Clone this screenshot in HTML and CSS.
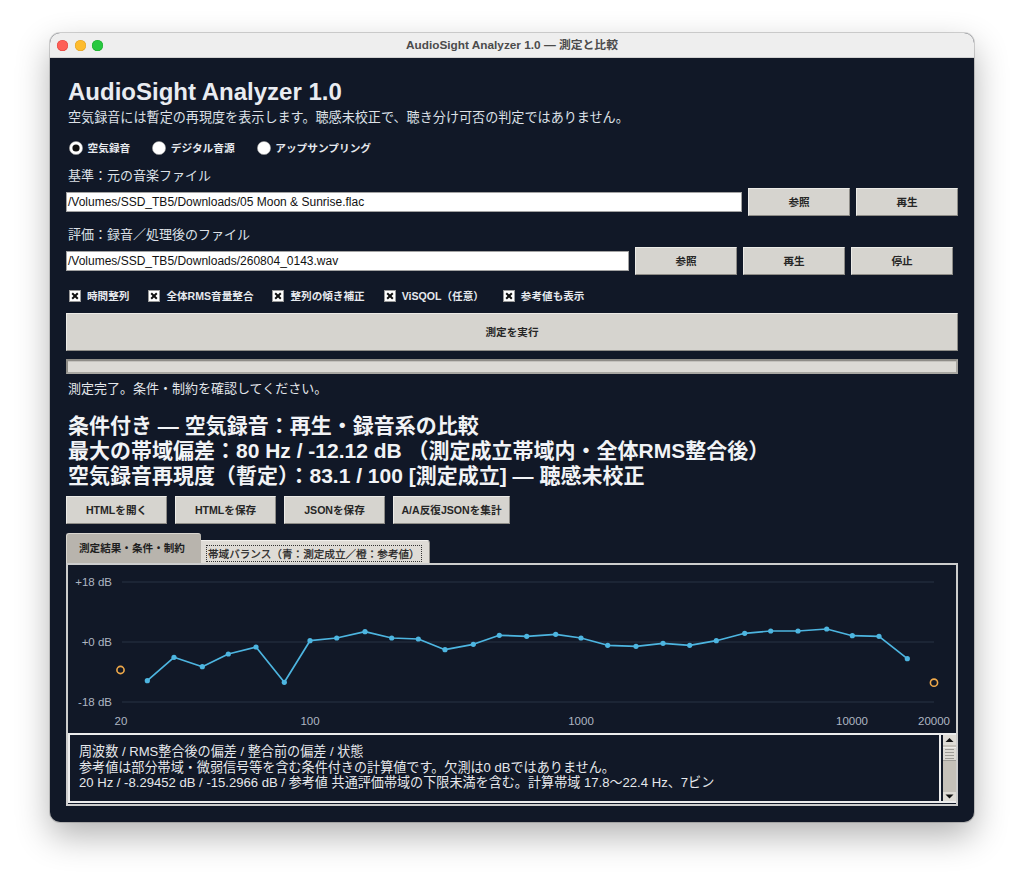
FILE: index.html
```html
<!DOCTYPE html>
<html lang="ja">
<head>
<meta charset="utf-8">
<title>AudioSight Analyzer 1.0 — 測定と比較</title>
<link rel="stylesheet" href="styles.css">
</head>
<body>
<div class="window">
  <div class="titlebar">
    <div class="lights"><span class="light red"></span><span class="light yellow"></span><span class="light green"></span></div>
    <div class="wintitle">AudioSight Analyzer 1.0 — 測定と比較</div>
    <div></div>
  </div>
  <div class="content">
    <h1 class="app-title">AudioSight Analyzer 1.0</h1>
    <p class="subtitle">空気録音には暫定の再現度を表示します。聴感未校正で、聴き分け可否の判定ではありません。</p>

    <div class="radios">
      <label class="radio"><svg class="radio-icon" viewBox="0 0 14 14"><circle cx="7" cy="7" r="6.6" fill="#ffffff" stroke="#9a9a9a" stroke-width="0.6"/><circle cx="7" cy="7" r="3.6" fill="#111111"/></svg><span>空気録音</span></label>
      <label class="radio"><svg class="radio-icon" viewBox="0 0 14 14"><circle cx="7" cy="7" r="6.6" fill="#ffffff" stroke="#9a9a9a" stroke-width="0.6"/></svg><span>デジタル音源</span></label>
      <label class="radio"><svg class="radio-icon" viewBox="0 0 14 14"><circle cx="7" cy="7" r="6.6" fill="#ffffff" stroke="#9a9a9a" stroke-width="0.6"/></svg><span>アップサンプリング</span></label>
    </div>

    <div class="field-label first">基準：元の音楽ファイル</div>
    <div class="file-row">
      <div class="entry">/Volumes/SSD_TB5/Downloads/05 Moon &amp; Sunrise.flac</div>
      <button class="btn">参照</button>
      <button class="btn">再生</button>
    </div>

    <div class="field-label">評価：録音／処理後のファイル</div>
    <div class="file-row second">
      <div class="entry">/Volumes/SSD_TB5/Downloads/260804_0143.wav</div>
      <button class="btn">参照</button>
      <button class="btn">再生</button>
      <button class="btn">停止</button>
    </div>

    <div class="checks">
      <label class="check"><svg class="check-icon" viewBox="0 0 12 12"><rect x="0.5" y="0.5" width="11" height="11" fill="#ffffff" stroke="#9a9a9a"/><path d="M3.2 3.2 L8.8 8.8 M8.8 3.2 L3.2 8.8" stroke="#111" stroke-width="2"/></svg><span>時間整列</span></label>
      <label class="check"><svg class="check-icon" viewBox="0 0 12 12"><rect x="0.5" y="0.5" width="11" height="11" fill="#ffffff" stroke="#9a9a9a"/><path d="M3.2 3.2 L8.8 8.8 M8.8 3.2 L3.2 8.8" stroke="#111" stroke-width="2"/></svg><span>全体RMS音量整合</span></label>
      <label class="check"><svg class="check-icon" viewBox="0 0 12 12"><rect x="0.5" y="0.5" width="11" height="11" fill="#ffffff" stroke="#9a9a9a"/><path d="M3.2 3.2 L8.8 8.8 M8.8 3.2 L3.2 8.8" stroke="#111" stroke-width="2"/></svg><span>整列の傾き補正</span></label>
      <label class="check"><svg class="check-icon" viewBox="0 0 12 12"><rect x="0.5" y="0.5" width="11" height="11" fill="#ffffff" stroke="#9a9a9a"/><path d="M3.2 3.2 L8.8 8.8 M8.8 3.2 L3.2 8.8" stroke="#111" stroke-width="2"/></svg><span>ViSQOL（任意）</span></label>
      <label class="check"><svg class="check-icon" viewBox="0 0 12 12"><rect x="0.5" y="0.5" width="11" height="11" fill="#ffffff" stroke="#9a9a9a"/><path d="M3.2 3.2 L8.8 8.8 M8.8 3.2 L3.2 8.8" stroke="#111" stroke-width="2"/></svg><span>参考値も表示</span></label>
    </div>

    <button class="btn big">測定を実行</button>
    <div class="progress"><div class="progress-inner"></div></div>

    <div class="status">測定完了。条件・制約を確認してください。</div>

    <div class="results">
      <div>条件付き — 空気録音：再生・録音系の比較</div>
      <div>最大の帯域偏差：80 Hz / -12.12 dB （測定成立帯域内・全体RMS整合後）</div>
      <div>空気録音再現度（暫定）：83.1 / 100 [測定成立] — 聴感未校正</div>
    </div>

    <div class="actions">
      <button class="btn act">HTMLを開く</button>
      <button class="btn act">HTMLを保存</button>
      <button class="btn act">JSONを保存</button>
      <button class="btn act wide">A/A反復JSONを集計</button>
    </div>

    <div class="tabs">
      <div class="tab tab-a">測定結果・条件・制約</div>
      <div class="tab tab-b"><span class="focus">帯域バランス（青：測定成立／橙：参考値）</span></div>
    </div>

    <div class="panel">
      <div class="chart">
        <svg class="chart-svg" viewBox="0 0 888 168" width="888" height="168">
          <g stroke="#283244" stroke-width="1">
            <line x1="54" y1="17" x2="866" y2="17"/>
            <line x1="54" y1="77" x2="866" y2="77"/>
            <line x1="54" y1="137" x2="866" y2="137"/>
          </g>
          <g class="axis" fill="#aeb6c2" font-size="11.5">
            <text x="44" y="21" text-anchor="end">+18 dB</text>
            <text x="44" y="81" text-anchor="end">+0 dB</text>
            <text x="44" y="141" text-anchor="end">-18 dB</text>
            <text x="53" y="160" text-anchor="middle">20</text>
            <text x="242" y="160" text-anchor="middle">100</text>
            <text x="513" y="160" text-anchor="middle">1000</text>
            <text x="784" y="160" text-anchor="middle">10000</text>
            <text x="866" y="160" text-anchor="middle">20000</text>
          </g>
          <polyline fill="none" stroke="#4db5e0" stroke-width="1.7" stroke-linejoin="round"
            points="79.3,115.7 106,92.3 134.3,101.7 160.3,89 188,82 216.3,117.3 242,75.7 268.7,73 297,66.7 323.7,73 350.3,74 377,84.7 405.3,79.3 431.3,70.3 458.7,71.3 487.7,69.3 513,73 539.7,80.3 568,81.3 595,78.3 621.7,80.3 648.3,75.7 676.7,68.3 702.7,66 730,66 758.7,64 784.3,70.7 811,71.3 839.3,93.7"/>
          <g fill="#4db5e0">
            <circle cx="79.3" cy="115.7" r="2.6"/><circle cx="106" cy="92.3" r="2.6"/><circle cx="134.3" cy="101.7" r="2.6"/>
            <circle cx="160.3" cy="89" r="2.6"/><circle cx="188" cy="82" r="2.6"/><circle cx="216.3" cy="117.3" r="2.6"/>
            <circle cx="242" cy="75.7" r="2.6"/><circle cx="268.7" cy="73" r="2.6"/><circle cx="297" cy="66.7" r="2.6"/>
            <circle cx="323.7" cy="73" r="2.6"/><circle cx="350.3" cy="74" r="2.6"/><circle cx="377" cy="84.7" r="2.6"/>
            <circle cx="405.3" cy="79.3" r="2.6"/><circle cx="431.3" cy="70.3" r="2.6"/><circle cx="458.7" cy="71.3" r="2.6"/>
            <circle cx="487.7" cy="69.3" r="2.6"/><circle cx="513" cy="73" r="2.6"/><circle cx="539.7" cy="80.3" r="2.6"/>
            <circle cx="568" cy="81.3" r="2.6"/><circle cx="595" cy="78.3" r="2.6"/><circle cx="621.7" cy="80.3" r="2.6"/>
            <circle cx="648.3" cy="75.7" r="2.6"/><circle cx="676.7" cy="68.3" r="2.6"/><circle cx="702.7" cy="66" r="2.6"/>
            <circle cx="730" cy="66" r="2.6"/><circle cx="758.7" cy="64" r="2.6"/><circle cx="784.3" cy="70.7" r="2.6"/>
            <circle cx="811" cy="71.3" r="2.6"/><circle cx="839.3" cy="93.7" r="2.6"/>
          </g>
          <g fill="none" stroke="#f0a94a" stroke-width="1.6">
            <circle cx="52.5" cy="105" r="3.6"/>
            <circle cx="866" cy="117.7" r="3.6"/>
          </g>
        </svg>
      </div>
      <div class="textframe">
        <div class="textarea">
          <div>周波数 / RMS整合後の偏差 / 整合前の偏差 / 状態</div>
          <div>参考値は部分帯域・微弱信号等を含む条件付きの計算値です。欠測は0 dBではありません。</div>
          <div>20 Hz / -8.29452 dB / -15.2966 dB / 参考値 共通評価帯域の下限未満を含む。計算帯域 17.8〜22.4 Hz、7ビン</div>
        </div>
        <div class="scrollbar">
          <div class="sb-arrow up"><svg viewBox="0 0 13 10" width="13" height="10"><path d="M2.5 7 L6.5 3 L10.5 7 Z" fill="#111"/></svg></div>
          <div class="sb-thumb"><span></span><span></span><span></span><span></span></div>
          <div class="sb-trough"></div>
          <div class="sb-arrow down"><svg viewBox="0 0 13 9" width="13" height="9"><path d="M2.5 2.5 L10.5 2.5 L6.5 6.5 Z" fill="#111"/></svg></div>
        </div>
      </div>
    </div>
  </div>
</div>
</body>
</html>
```

FILE: styles.css
```css
* { box-sizing: border-box; }
html, body { margin: 0; padding: 0; }
body {
  background: #ffffff;
  font-family: "Liberation Sans", "Noto Sans CJK JP", sans-serif;
  width: 1024px;
  height: 889px;
  overflow: hidden;
}

.window {
  width: 924px;
  height: 789px;
  margin: 33px 0 0 50px;
  border-radius: 10px;
  overflow: hidden;
  background: #111827;
  box-shadow: 0 0 0 1px rgba(0,0,0,0.16), 0 14px 34px rgba(0,0,0,0.30);
  display: flex;
  flex-direction: column;
}

/* title bar */
.titlebar {
  flex: none;
  height: 25px;
  background: #eeeeee;
  border-bottom: 1px solid #d2d2d2;
  display: grid;
  grid-template-columns: 1fr auto 1fr;
  align-items: center;
}
.lights { display: flex; gap: 6.7px; padding-left: 7px; }
.light { width: 11px; height: 11px; border-radius: 50%; display: block; }
.red { background: #fe5f57; box-shadow: inset 0 0 0 0.5px #e0443e; }
.yellow { background: #febc2e; box-shadow: inset 0 0 0 0.5px #dea123; }
.green { background: #28c840; box-shadow: inset 0 0 0 0.5px #1aab29; }
.wintitle {
  font-size: 11.8px;
  font-weight: bold;
  color: #4b4b4b;
  line-height: 16px;
}

.content {
  flex: 1;
  padding: 0 16px;
  color: #e5e7eb;
}

.app-title {
  margin: 20px 0 0 2px;
  font-size: 24px;
  line-height: 28px;
  font-weight: bold;
  color: #e9ecf1;
}
.subtitle {
  margin: 3px 0 0 2px;
  font-size: 13.1px;
  line-height: 18px;
  color: #dde1e7;
}

/* radios */
.radios {
  margin: 11px 0 0 3px;
  height: 20px;
  display: flex;
  align-items: center;
  gap: 22px;
}
.radio, .check {
  display: flex;
  align-items: center;
  font-size: 10.7px;
  font-weight: bold;
  color: #e6e9ee;
  line-height: 14px;
}
.radio-icon { width: 14px; height: 14px; margin-right: 4.5px; flex: none; }

.field-label {
  margin: 10px 0 0 2px;
  font-size: 13px;
  line-height: 18px;
  color: #dde1e7;
}
.field-label.first { margin-top: 9px; }

.file-row {
  margin-top: 3px;
  height: 28px;
  display: flex;
  align-items: center;
  gap: 6px;
}
.file-row.second { margin-right: 5px; }
.entry {
  flex: 1;
  height: 20px;
  background: #ffffff;
  border: 1px solid #a3a3a3;
  font-family: "Liberation Sans", sans-serif;
  font-size: 12px;
  line-height: 18px;
  color: #111;
  padding-left: 1px;
  white-space: nowrap;
  overflow: hidden;
}

.btn {
  flex: none;
  width: 102px;
  height: 28px;
  padding: 0;
  margin: 0;
  background: #d6d4cf;
  border: 1px solid;
  border-color: #ecebe7 #8e8c87 #8e8c87 #ecebe7;
  font-family: "Liberation Sans", "Noto Sans CJK JP", sans-serif;
  font-size: 10.6px;
  font-weight: bold;
  color: #262626;
  line-height: 14px;
  text-align: center;
}

.checks {
  margin: 12px 0 0 3px;
  height: 18px;
  display: flex;
  align-items: center;
  gap: 19px;
}
.check { font-size: 10.6px; }
.check-icon { width: 12px; height: 12px; margin-right: 6px; flex: none; }

.btn.big {
  display: block;
  width: 100%;
  height: 38px;
  margin-top: 8px;
}

.progress {
  margin-top: 8px;
  height: 15px;
  border: 2px solid;
  border-color: #8f8d88 #a9a7a2 #a9a7a2 #8f8d88;
  background: #dcdad5;
}
.progress-inner { height: 100%; border-top: 1px solid #c4c2bd; }

.status {
  margin: 6px 0 0 2px;
  font-size: 13px;
  line-height: 18px;
  color: #e3e6eb;
}

.results {
  margin: 15px 0 0 2px;
  font-size: 21px;
  line-height: 25px;
  font-weight: bold;
  color: #f1f3f6;
  white-space: nowrap;
}

.actions {
  margin-top: 8px;
  height: 28px;
  display: flex;
  gap: 8px;
}
.btn.act { width: 101px; }
.btn.act.wide { width: 117px; }

/* tabs */
.tabs {
  margin-top: 9px;
  height: 30px;
  display: flex;
  align-items: flex-end;
}
.tab {
  font-size: 10.6px;
  font-weight: bold;
  color: #1f1f1f;
  line-height: 14px;
}
.tab-a {
  width: 135px;
  height: 30px;
  background: #b8b4ad;
  border-top: 1px solid #d9d6d0;
  border-left: 1px solid #d9d6d0;
  border-top-left-radius: 3px;
  border-top-right-radius: 3px;
  padding: 7px 0 0 12px;
}
.tab-b {
  width: 229px;
  height: 23px;
  background: #dfdcd6;
  border-top: 1px solid #f2f0ec;
  border-right: 1px solid #8f8d88;
  border-top-right-radius: 3px;
  padding: 4px 0 0 5px;
}
.focus {
  display: inline-block;
  border: 1px dotted #333;
  padding: 1px 1px 0 1px;
  line-height: 14px;
  font-weight: normal;
  -webkit-text-stroke: 0.25px #1f1f1f;
}

/* panel */
.panel {
  height: 243px;
  border: 2px solid #cdcdcd;
  display: flex;
  flex-direction: column;
}
.chart { height: 168px; flex: none; }
.chart-svg { display: block; font-family: "Liberation Sans", sans-serif; }

.textframe {
  height: 70px;
  margin-bottom: 1px;
  border-top: 2px solid #ececec;
  border-left: 2px solid #ececec;
  border-bottom: 2px solid #ececec;
  display: flex;
}
.textarea {
  flex: 1;
  border-right: 2px solid #ececec;
  padding: 9px 0 0 9px;
  font-size: 13.1px;
  line-height: 15.6px;
  color: #e6e8ec;
  white-space: nowrap;
  overflow: hidden;
}
.scrollbar {
  width: 13px;
  margin-left: 2px;
  flex: none;
  display: flex;
  flex-direction: column;
  background: #c5c1b9;
}
.sb-arrow { height: 10px; background: #dedbd5; display: flex; }
.sb-arrow.down { height: 9px; }
.sb-arrow svg { display: block; }
.sb-thumb {
  height: 14px;
  margin-top: 2px;
  background: #dcd9d3;
  border-top: 1px solid #efede9;
  border-bottom: 1px solid #9e9c97;
  display: flex;
  flex-direction: column;
  justify-content: center;
  gap: 2px;
  padding: 0 2px;
}
.sb-thumb span { display: block; height: 1px; background: #9d9b96; }
.sb-trough { flex: 1; }
```
